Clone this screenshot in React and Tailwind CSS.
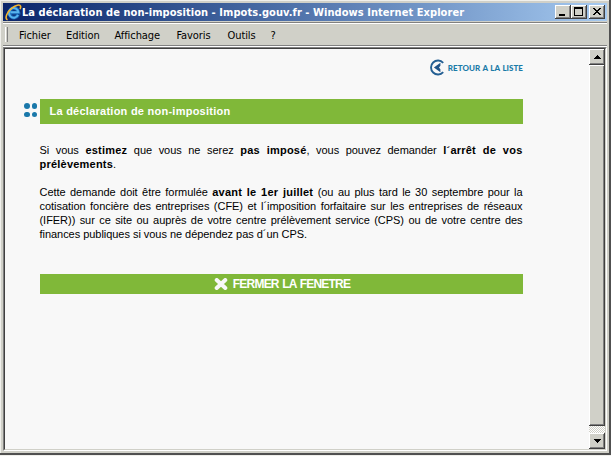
import React from 'react';

const MENU = [
  ['Fichier', 'w-[47px]'],
  ['Edition', 'w-[48.5px]'],
  ['Affichage', 'w-[62px]'],
  ['Favoris', 'w-[51px]'],
  ['Outils', 'w-[43px]'],
  ['?', 'w-[20px]'],
];

const RAISED =
  'bg-[#d0d0c8] shadow-[inset_-1px_-1px_0_#404040,inset_1px_1px_0_#ffffff,inset_-2px_-2px_0_#808080]';

function ExplorerLogo() {
  return (
    <svg width="17" height="17" viewBox="0 0 17 17" fill="none">
      <path d="M13.2 10.8A4.6 4.8 0 1 1 13.6 8.6H5.4" stroke="#1764b5" strokeWidth="3.6" />
      <path d="M13 10.9A4.7 4.9 0 1 1 13.4 8.3H5.4" stroke="#58b4ee" strokeWidth="2" />
      <path d="M2.6 15.8C-.8 14.6 2 8 6.8 4.2C10.8 1 15 .1 15.6 2.2C15.8 3 15.6 4 15 5" stroke="#f5b52e" strokeWidth="1.6" />
    </svg>
  );
}

function TitleBar() {
  return (
    <div className="flex h-[18px] items-center bg-linear-to-r from-[#0a246a] to-[#a6caf0] pr-[2px] pl-[2px]">
      <ExplorerLogo />
      <span className="pt-px whitespace-nowrap font-['DejaVu_Sans_Condensed','DejaVu_Sans',sans-serif] text-[11px] leading-[18px] font-bold tracking-[0.06px] text-white">
        La déclaration de non-imposition - Impots.gouv.fr - Windows Internet Explorer
      </span>
      <div className="ml-auto flex">
        <div className={`h-[14px] w-[16px] ${RAISED}`}>
          <div className="mt-[9px] ml-[4px] h-[2px] w-[6px] bg-black" />
        </div>
        <div className={`h-[14px] w-[16px] ${RAISED}`}>
          <div className="mt-[2px] ml-[3px] h-[9px] w-[9px] border border-t-2 border-black" />
        </div>
        <div className={`ml-[2px] h-[14px] w-[16px] ${RAISED}`}>
          <svg width="16" height="14" shapeRendering="crispEdges" fill="none" stroke="#000" strokeWidth="1">
            <path d="M4 3.5h2M10 3.5h2M5 4.5h2M9 4.5h2M6 5.5h4M7 6.5h2M6 7.5h4M5 8.5h2M9 8.5h2M4 9.5h2M10 9.5h2" />
          </svg>
        </div>
      </div>
    </div>
  );
}

function ScrollBar() {
  return (
    <div className="flex h-full w-[16px] flex-col bg-[repeating-conic-gradient(#ffffff_0_25%,#d0d0c8_0_50%)] bg-[length:2px_2px]">
      <div className={`flex h-[16px] items-center justify-center ${RAISED}`}>
        <svg width="7" height="4" shapeRendering="crispEdges"><path d="M3 0h1v1h1v1h1v1h1v1H0V3h1V2h1V1h1z" /></svg>
      </div>
      <div className={`h-[361px] ${RAISED}`} />
      <div className={`mt-auto flex h-[16px] items-center justify-center ${RAISED}`}>
        <svg width="7" height="4" shapeRendering="crispEdges"><path d="M0 0h7v1H6v1H5v1H4v1H3V3H2V2H1V1H0z" /></svg>
      </div>
    </div>
  );
}

function Line({ children, last }) {
  return (
    <div className={`h-[14px] whitespace-nowrap ${last ? '' : '[text-align-last:justify]'}`}>{children}</div>
  );
}

function Bold({ children }) {
  return <b className="tracking-[0.22px]">{children}</b>;
}

export default function App() {
  return (
    <div className="h-[456px] w-[611px] bg-[#f0f0ec]">
      <div className="flex h-[455px] w-[611px] flex-col overflow-hidden border-r-2 border-b-2 border-r-[#505050] border-b-[#505050] bg-[#d0d0c8] pt-[3px] pr-[2px] pb-[2px] pl-[3px] font-['Liberation_Sans',Arial,sans-serif] shadow-[inset_1px_1px_0_#f0f0ec]">
        <TitleBar />
        <div className="mt-px h-[2px] border-t border-b border-t-[#808080] border-b-white" />
        <div className="flex h-[21px] items-center">
          <div className="mr-[9px] ml-[2px] h-[15px] w-[3px] border-r border-l border-r-[#808080] border-l-white" />
          <nav className="flex pt-[2px] pl-[2px] font-['DejaVu_Sans_Condensed','DejaVu_Sans',sans-serif] text-[11px] leading-[20px] tracking-[-0.08px] text-black">
            {MENU.map(([label, width]) => (
              <span key={label} className={`whitespace-nowrap ${width}`}>{label}</span>
            ))}
          </nav>
        </div>
        <div className="h-[2px] border-t border-b border-t-[#808080] border-b-white" />
        <div className="flex min-h-0 flex-1 border border-t-[#808080] border-r-white border-b-white border-l-[#808080]">
          <div className="flex min-h-0 flex-1 border border-t-[#404040] border-r-[#d0d0c8] border-b-[#d0d0c8] border-l-[#404040] bg-[#f8f8f8]">
            <main className="min-w-0 flex-1 pl-[18px] text-[11px] text-black">
              <div className="flex h-[50px] w-[500px] items-start justify-end pt-[10px]">
                <svg className="mr-[2px]" width="17" height="17" viewBox="0.6 0 17 17" fill="none">
                  <path d="M14.8 3.8A7 7 0 1 0 14.8 13.2" stroke="#245f93" strokeWidth="1.9" />
                  <path d="M12 3.8L5.5 8.5L12 13.2V10.2L10.6 8.5L12 6.8z" fill="#1f5389" />
                </svg>
                <span className="whitespace-nowrap font-['Lato',sans-serif] text-[8px] leading-[18px] font-black tracking-[0.03px] text-[#1b7ba8] [word-spacing:0.6px]">
                  RETOUR A LA LISTE
                </span>
              </div>
              <div className="flex w-[500px]">
                <div className="mt-[4px] mr-[3px] ml-px grid h-[14px] w-[13px] grid-cols-2 gap-x-[2.5px] gap-y-[3px]">
                  <i className="h-[5.5px] w-[5.5px] rounded-full bg-[#1a78aa]" />
                  <i className="h-[5.5px] w-[5.5px] rounded-full bg-[#1a78aa]" />
                  <i className="h-[5.5px] w-[5.5px] rounded-full bg-[#1a78aa]" />
                  <i className="h-[5.5px] w-[5.5px] rounded-full bg-[#1a78aa]" />
                </div>
                <h1 className="h-[25px] w-[483px] bg-[#80b839] pl-[9.5px] text-[11px] leading-[25px] font-bold tracking-[0.25px] text-white">
                  La déclaration de non-imposition
                </h1>
              </div>
              <div className="ml-[16.5px] w-[483px] pt-[19px] leading-[14px] tracking-[-0.04px]">
                <p>
                  <Line>Si vous <Bold>estimez</Bold> que vous ne serez <Bold>pas imposé</Bold>, vous pouvez demander <Bold>l´arrêt de vos</Bold></Line>
                  <Line last><Bold>prélèvements</Bold>.</Line>
                </p>
                <p className="mt-[14px]">
                  <Line>Cette demande doit être formulée <Bold>avant le 1er juillet</Bold> (ou au plus tard le 30 septembre pour la</Line>
                  <Line>cotisation foncière des entreprises (CFE) et l´imposition forfaitaire sur les entreprises de réseaux</Line>
                  <Line>(IFER)) sur ce site ou auprès de votre centre prélèvement service (CPS) ou de votre centre des</Line>
                  <Line last>finances publiques si vous ne dépendez pas d´un CPS.</Line>
                </p>
              </div>
              <button className="mt-[33px] ml-[17px] flex h-[20px] w-[483px] items-center justify-center bg-[#80b839] pl-px text-[12px] leading-[20px] font-bold tracking-[-0.8px] whitespace-nowrap text-white [word-spacing:1px]">
                <svg className="mr-[5px] -mt-px" width="14" height="12" viewBox="0 0 13 12">
                  <path d="M2.2 2L10.8 10M10.8 2L2.2 10" stroke="#f8f8f8" strokeWidth="4" strokeLinecap="round" />
                </svg>
                FERMER LA FENETRE
              </button>
            </main>
            <ScrollBar />
          </div>
        </div>
      </div>
    </div>
  );
}
